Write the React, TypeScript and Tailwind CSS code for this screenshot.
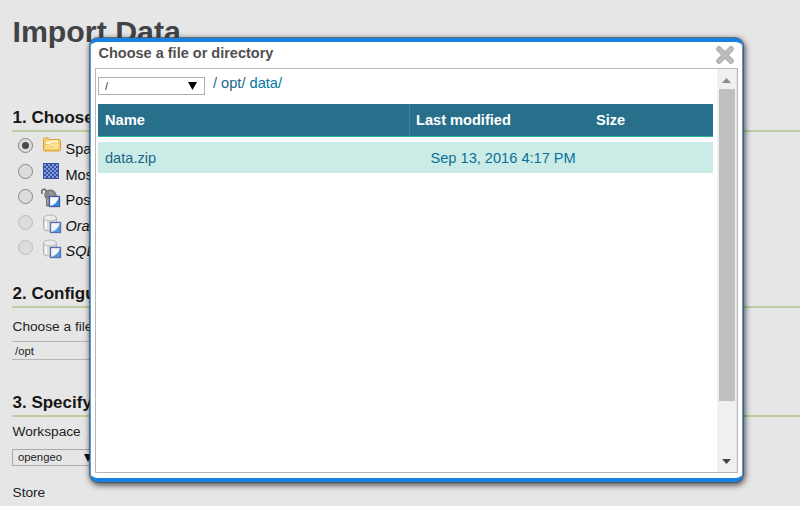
import React from "react";

const Folder = () => (
  <svg width="18" height="16" viewBox="0 0 18 16">
    <path d="M.5 2.500Q.5 1 2 1H5.500l1.500 1.500H16q1.500 0 1.500 1.500V12.500q0 1.500-1.500 1.500H2Q.5 14 .5 12.500Z" fill="#f6cf68" stroke="#d9a238" />
    <path d="M3 4.500h3.500L8 3.500h7v5H3Z" fill="#fff8dc" />
    <path d="M2 7.500H7L8.500 6H16v6.500H2Z" fill="#fbe5a0" stroke="#edbb4c" strokeWidth=".8" />
    <path d="M4 10h8" stroke="#efbd4d" />
  </svg>
);

const Mosaic = () => (
  <svg width="16" height="16" viewBox="0 0 16 16">
    <rect x=".5" y=".5" width="15" height="15" fill="#3454ac" stroke="#3a55a8" />
    {[0, 1, 2, 3, 4, 5, 6].map((r) =>
      [0, 1, 2, 3, 4, 5, 6].map((c) =>
        (r + c) % 2 === 0 ? <rect key={r * 7 + c} x={1 + c * 2} y={1 + r * 2} width="2" height="2" fill="#839ad6" /> : null
      )
    )}
  </svg>
);

const Badge = () => (
  <>
    <rect x="8.500" y="8.500" width="10" height="10" fill="#f8fbff" stroke="#4659a8" strokeWidth="1.300" />
    <path d="M18 9v9h-8.500q6.500-2 8.500-9Z" fill="#3389e0" />
  </>
);

const Elephant = () => (
  <svg width="20" height="20" viewBox="0 0 20 20">
    <path d="M1.200 6Q-.3 1.300 3 1.200q2.500 0 2 2.800" fill="none" stroke="#666" strokeWidth="1.500" />
    <path d="M4 5Q5.500 2 8.500 2q5-.5 6 3.500l2 3.500h-8v9H5.500L5.500 11Q3 9 4 5Z" fill="#858585" stroke="#606060" strokeWidth=".7" />
    <path d="M8.500 4q4 0 3.500 4.500-3 0-3.500-4.500M7 11v6" fill="none" stroke="#b0b0b0" />
    <Badge />
  </svg>
);

const Database = () => (
  <svg width="20" height="20" viewBox="0 0 20 20">
    <g opacity=".75">
      <path d="M1.500 4v10.500q0 2.500 6.500 2.500t6.500-2.500V4" fill="#d8d8d8" stroke="#a0a0a0" />
      <path d="M4 6.500v8.500" stroke="#fff" strokeWidth="2" />
      <ellipse cx="8" cy="4" rx="6.500" ry="3" fill="#ededed" stroke="#a8a8a8" />
    </g>
    <g opacity=".85">
      <Badge />
    </g>
  </svg>
);

const Radio = ({ on, off }: { on?: boolean; off?: boolean }) => (
  <span className={`mt-[1px] flex size-[15px] shrink-0 items-center justify-center rounded-full border bg-[#dcdcdc] ${off ? "border-[#bdbdbd]" : "border-[#868686]"}`}>
    {on && <span className="size-[7px] rounded-full bg-[#484848]" />}
  </span>
);

const sources = [
  { label: "Spatial", icon: <Folder />, pad: "pl-[10px]", on: true },
  { label: "Mosaic", icon: <Mosaic />, pad: "pl-[10px]" },
  { label: "PostGIS", icon: <Elephant />, pad: "pl-[8px]" },
  { label: "Oracle", icon: <Database />, pad: "pl-[9px]", off: true },
  { label: "SQL", icon: <Database />, pad: "pl-[9px]", off: true },
];

const Heading = ({ children }: { children: React.ReactNode }) => (
  <h2 className="h-[28px] border-b-2 border-[#bdcf9f] pl-[0.5px] text-[17px] leading-[28px] font-bold text-[#161616]">{children}</h2>
);

function Dialog() {
  return (
    <section className="absolute top-[38px] left-[90px] flex h-[444px] w-[653px] flex-col rounded-[8px] border-x border-t-[4px] border-b-[4px] border-x-[#4b9fe6] border-y-[#1683e2] bg-white px-[4px] pb-[5px] shadow-[0px_0px_0px_1px_rgba(70,80,90,0.7),1px_2px_6px_1px_rgba(0,0,0,0.7)]">
      <header className="flex h-[26px] shrink-0 justify-between pr-[3px] pl-[3.5px]">
        <h3 className="text-[14.500px] leading-[22px] font-bold text-[#505050]">Choose a file or directory</h3>
        <svg width="20" height="20" viewBox="0 0 20 20" className="mt-[3px]">
          <path d="M4 4l12 12M16 4L4 16" stroke="#a5a5a5" strokeWidth="5.500" strokeLinecap="round" />
          <path d="M4 4l12 12M16 4L4 16" stroke="#bcbcbc" strokeWidth="4" strokeLinecap="round" />
        </svg>
      </header>
      <div className="flex min-h-0 flex-1 border border-[#b9b9b9]">
        <div className="w-[621px] shrink-0 pt-[4px] pr-[4px] pl-[2px] text-[14.600px] text-[#1b6689]">
          <div className="flex h-[31px]">
            <div className="mt-[4px] flex h-[18px] w-[107px] items-center justify-between border border-[#b0b0b0] pr-[7px] pl-[6px] text-[11px] text-[#333]">
              <span>/</span>
              <svg width="9" height="8" viewBox="0 0 8 8" preserveAspectRatio="none"><path d="M0 0h8L4 8Z" fill="#000" /></svg>
            </div>
            <div className="ml-[8px] leading-[20px]">/ opt/ <span className="text-[#0076a1]">data/</span></div>
          </div>
          <div className="flex h-[33px] border-b border-[#27b79c] bg-[#276f8b] leading-[32px] font-bold text-white">
            <span className="w-[312px] border-r border-[#3c7f99] pl-[7px]">Name</span>
            <span className="w-[180px] pl-[6px]">Last modified</span>
            <span className="pl-[6px]">Size</span>
          </div>
          <div className="mt-[5px] flex h-[31px] bg-[#cbece6] leading-[32px]">
            <span className="w-[326px] border-r border-[#d1efe9] pl-[7px]">data.zip</span>
            <span className="w-[173px] border-r border-[#d1efe9] pl-[6.500px] text-[#0a6f9a]">Sep 13, 2016 4:17 PM</span>
          </div>
        </div>
        <div className="flex flex-1 flex-col items-center border-r border-[#e3e3e3] bg-[#f0f0f0]">
          <svg width="9" height="5" viewBox="0 0 9 5" className="mt-[9px] shrink-0"><path d="M0 5h9L4.500 0Z" fill="#8b8b8b" /></svg>
          <div className="mt-[6px] h-[312px] w-[16px] shrink-0 bg-[#bfbfbf]" />
          <svg width="9" height="5" viewBox="0 0 9 5" className="mt-[58px] shrink-0"><path d="M0 0h9L4.500 5Z" fill="#454545" /></svg>
        </div>
      </div>
    </section>
  );
}

export default function App() {
  return (
    <main className="relative h-[506px] w-[800px] overflow-hidden bg-[#e6e6e6] pl-[12px] font-['Liberation_Sans',Arial,sans-serif] text-[13.700px] text-[#222]">
      <h1 className="h-[104px] pt-[13px] pl-[0.500px] text-[30.300px] leading-[38px] font-bold text-[#414347]">Import Data</h1>
      <Heading>1. Choose</Heading>
      <div className="h-[148px] pt-[5px]">
        {sources.map((s) => (
          <div key={s.label} className="flex h-[25.500px] pl-[6px]">
            <Radio on={s.on} off={s.off} />
            <span className={`flex w-[32px] shrink-0 ${s.pad}`}>{s.icon}</span>
            <span className={`pl-[0.500px] text-[14.500px] leading-[25px] text-[#111] ${s.off ? "italic" : ""}`}>{s.label}</span>
          </div>
        ))}
      </div>
      <Heading>2. Configure</Heading>
      <div className="h-[81px] pt-[9px]">
        <p className="pl-[0.500px] leading-[20px]">Choose a file</p>
        <div className="mt-[4px] h-[19px] w-[300px] border-y border-[#b5b5b5] pl-[3px] text-[11.300px] leading-[18px]">/opt</div>
      </div>
      <Heading>3. Specify</Heading>
      <div className="pt-[5px]">
        <p className="pl-[0.500px] leading-[20px]">Workspace</p>
        <div className="mt-[7px] flex h-[17px] w-[85px] items-center justify-between border border-[#aaa] pr-[4px] pl-[5px] text-[11.300px]">
          opengeo
          <svg width="8" height="8" viewBox="0 0 8 8"><path d="M0 0h8L4 8Z" fill="#111" /></svg>
        </div>
        <p className="mt-[17px] pl-[0.500px] leading-[20px]">Store</p>
      </div>
      <Dialog />
    </main>
  );
}
